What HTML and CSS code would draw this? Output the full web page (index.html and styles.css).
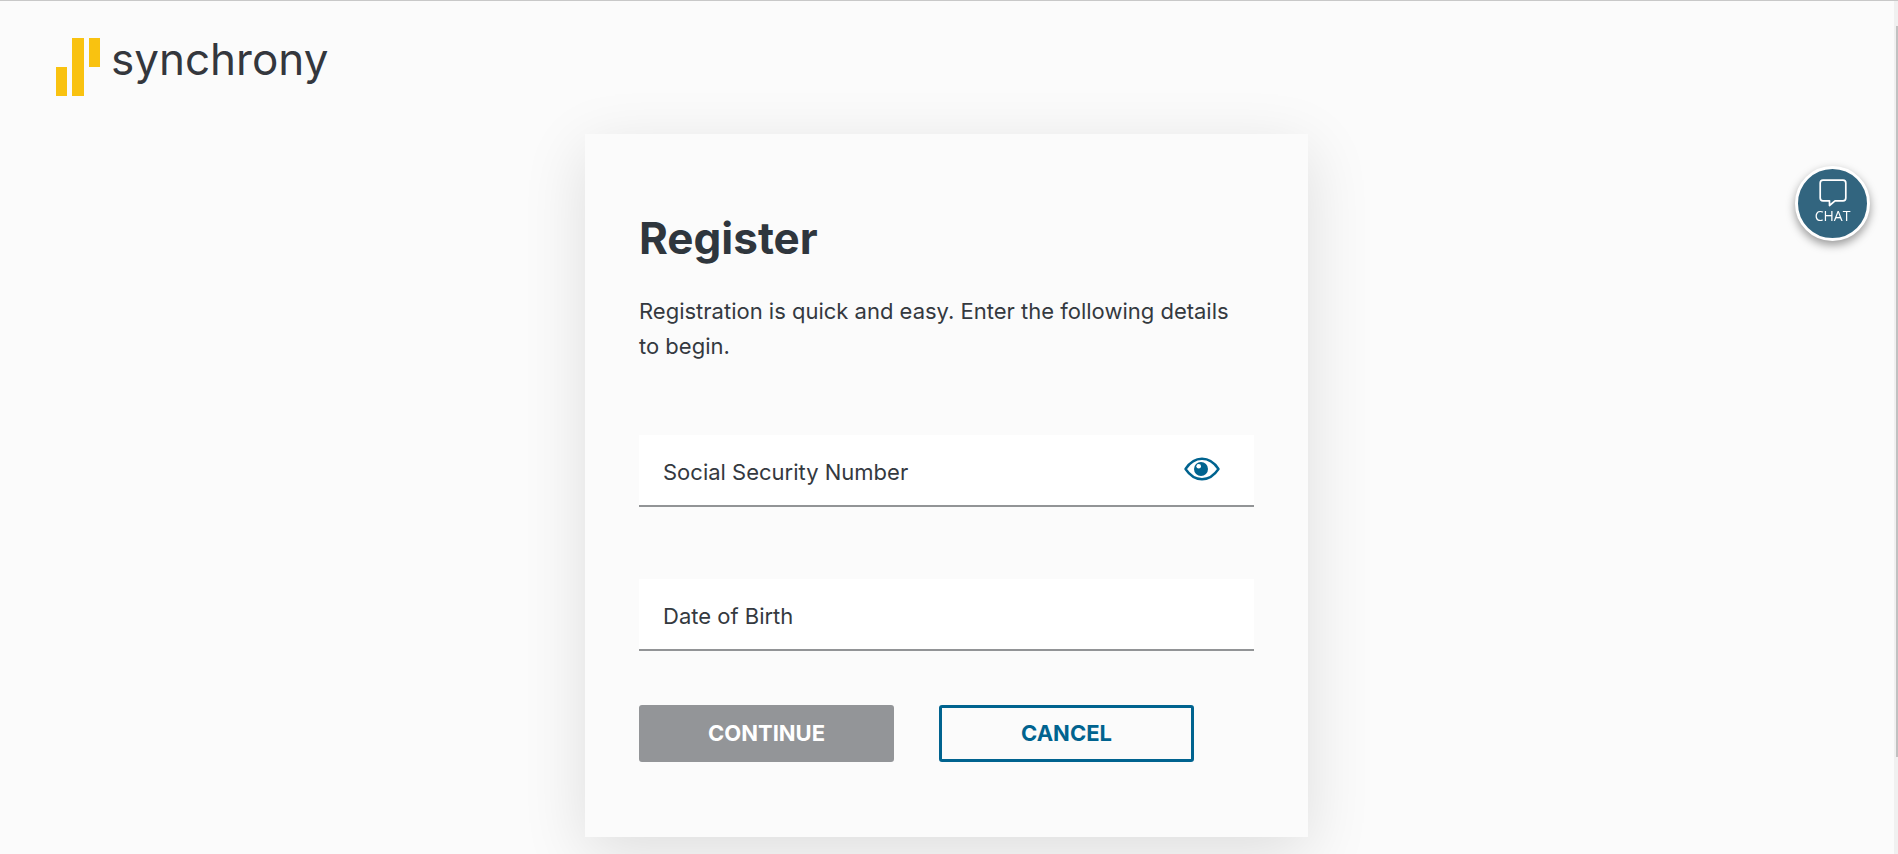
FILE: index.html
```html
<!DOCTYPE html>
<html lang="en">
<head>
<meta charset="utf-8">
<meta name="viewport" content="width=device-width, initial-scale=1">
<title>Register | Synchrony</title>
<link rel="stylesheet" href="styles.css">
</head>
<body>
<div class="page">
  <header class="header">
    <a class="logo" href="#">
      <svg class="logo-mark" viewBox="0 0 45 58" aria-hidden="true">
        <path d="M0 29h11v29H0zM16 0h12v58H16zM33 0h11v29H33z" fill="#f9c210"/>
      </svg>
      <span class="logo-name">synchrony</span>
    </a>
  </header>
  <main class="main">
    <form class="card">
      <h1 class="title">Register</h1>
      <p class="intro">Registration is quick and easy. Enter the following details to begin.</p>
      <div class="field">
        <input class="field-input" id="ssn" type="text" autocomplete="off">
        <label class="field-label" for="ssn">Social Security Number</label>
        <button class="reveal" type="button" aria-label="Show Social Security Number">
          <svg class="eye" viewBox="0 0 36 24" aria-hidden="true">
            <path d="M1.500 12C5.500 6 11 1.800 18 1.800S30.500 6 34.500 12C30.500 18 25 22.200 18 22.200S5.500 18 1.500 12Z" fill="none" stroke="#00638f" stroke-width="2.400" stroke-linejoin="round"/>
            <circle cx="17" cy="12" r="7" fill="#00638f"/>
            <circle cx="14.700" cy="9.300" r="2.300" fill="#fff"/>
          </svg>
        </button>
      </div>
      <div class="field">
        <input class="field-input" id="dob" type="text" autocomplete="off">
        <label class="field-label" for="dob">Date of Birth</label>
      </div>
      <div class="actions">
        <button class="button button-primary" type="submit" disabled>CONTINUE</button>
        <button class="button button-outline" type="button">CANCEL</button>
      </div>
    </form>
  </main>
</div>
<button class="chat" type="button">
  <svg class="chat-icon" viewBox="0 0 28 28" aria-hidden="true">
    <path d="M4 1.200H24Q26.800 1.200 26.800 4V19Q26.800 21.800 24 21.800H16L10.500 26.500V21.800H4Q1.200 21.800 1.200 19V4Q1.200 1.200 4 1.200Z" fill="none" stroke="#fff" stroke-width="1.700" stroke-linejoin="round"/>
  </svg>
  <span>CHAT</span>
</button>
<div class="scroll-track" aria-hidden="true"><div class="scroll-thumb"></div></div>
</body>
</html>
```
FILE: styles.css
```css
* { box-sizing: border-box; }

body {
  margin: 0;
  background: #fbfbfb;
  color: #34393f;
  font-family: Inter, "Liberation Sans", sans-serif;
  font-size: 22px;
}

.page {
  min-height: 100vh;
  padding: 0 5px 16px 0;
  border-top: 1px solid #c8c8c8;
  overflow: hidden;
}

.header { padding: 37px 56px 38px; }

.logo {
  display: flex;
  width: max-content;
  gap: 10px;
  color: #34373d;
  text-decoration: none;
}

.logo-mark { width: 45px; height: 58px; }

.logo-name {
  font-size: 44px;
  line-height: 42px;
}

.main {
  display: flex;
  justify-content: center;
}

.card {
  width: 100%;
  max-width: 723px;
  padding: 78px 54px 75px;
  background: #fbfbfb;
  box-shadow: 0 16px 60px rgba(0, 0, 0, 0.12);
}

.title {
  margin: 0 0 30px;
  color: #2f363d;
  font-size: 44px;
  line-height: 52px;
  font-weight: 700;
}

.intro {
  margin: 0 0 71px;
  line-height: 35px;
}

.field {
  display: grid;
  grid-template-columns: 1fr auto;
  align-items: center;
  height: 72px;
  background: #fff;
  border-bottom: 2px solid #929496;
}

.field + .field { margin-top: 72px; }

.field-input {
  grid-area: 1 / 1 / 2 / 3;
  width: 100%;
  height: 100%;
  padding: 4px 80px 0 24px;
  border: 0;
  background: transparent;
  color: inherit;
  font: inherit;
}

.field-label {
  grid-area: 1 / 1;
  padding: 4px 0 0 24px;
  pointer-events: none;
}

.reveal {
  grid-area: 1 / 2;
  display: flex;
  margin-right: 34px;
  padding: 0 0 2px;
  border: 0;
  background: none;
}

.eye { width: 36px; height: 24px; }

.actions {
  display: flex;
  gap: 45px;
  margin-top: 54px;
}

.button {
  width: 255px;
  height: 57px;
  padding: 0 0 1px;
  border: 3px solid #00638f;
  border-radius: 3px;
  font: inherit;
  font-weight: 700;
}

.button-primary {
  border-color: #939598;
  background: #939598;
  color: #fff;
}

.button-outline {
  background: transparent;
  color: #00638f;
}

.chat {
  position: fixed;
  top: 166px;
  right: 28px;
  display: flex;
  flex-direction: column;
  align-items: center;
  width: 75px;
  height: 75px;
  padding: 10px 0 0;
  border: 3px solid #fff;
  border-radius: 50%;
  background: #32657f;
  box-shadow: 0 4px 10px rgba(0, 0, 0, 0.4);
  color: #fff;
  font: 14px/18px "Open Sans", sans-serif;
}

.chat-icon { width: 28px; height: 28px; }

.scroll-track {
  position: fixed;
  top: 1px;
  right: 0;
  bottom: 0;
  width: 4px;
  padding: 25px 0 97px 2px;
  background: #f0f0f0;
}

.scroll-thumb {
  height: 100%;
  background: #c1c1c1;
}
```
